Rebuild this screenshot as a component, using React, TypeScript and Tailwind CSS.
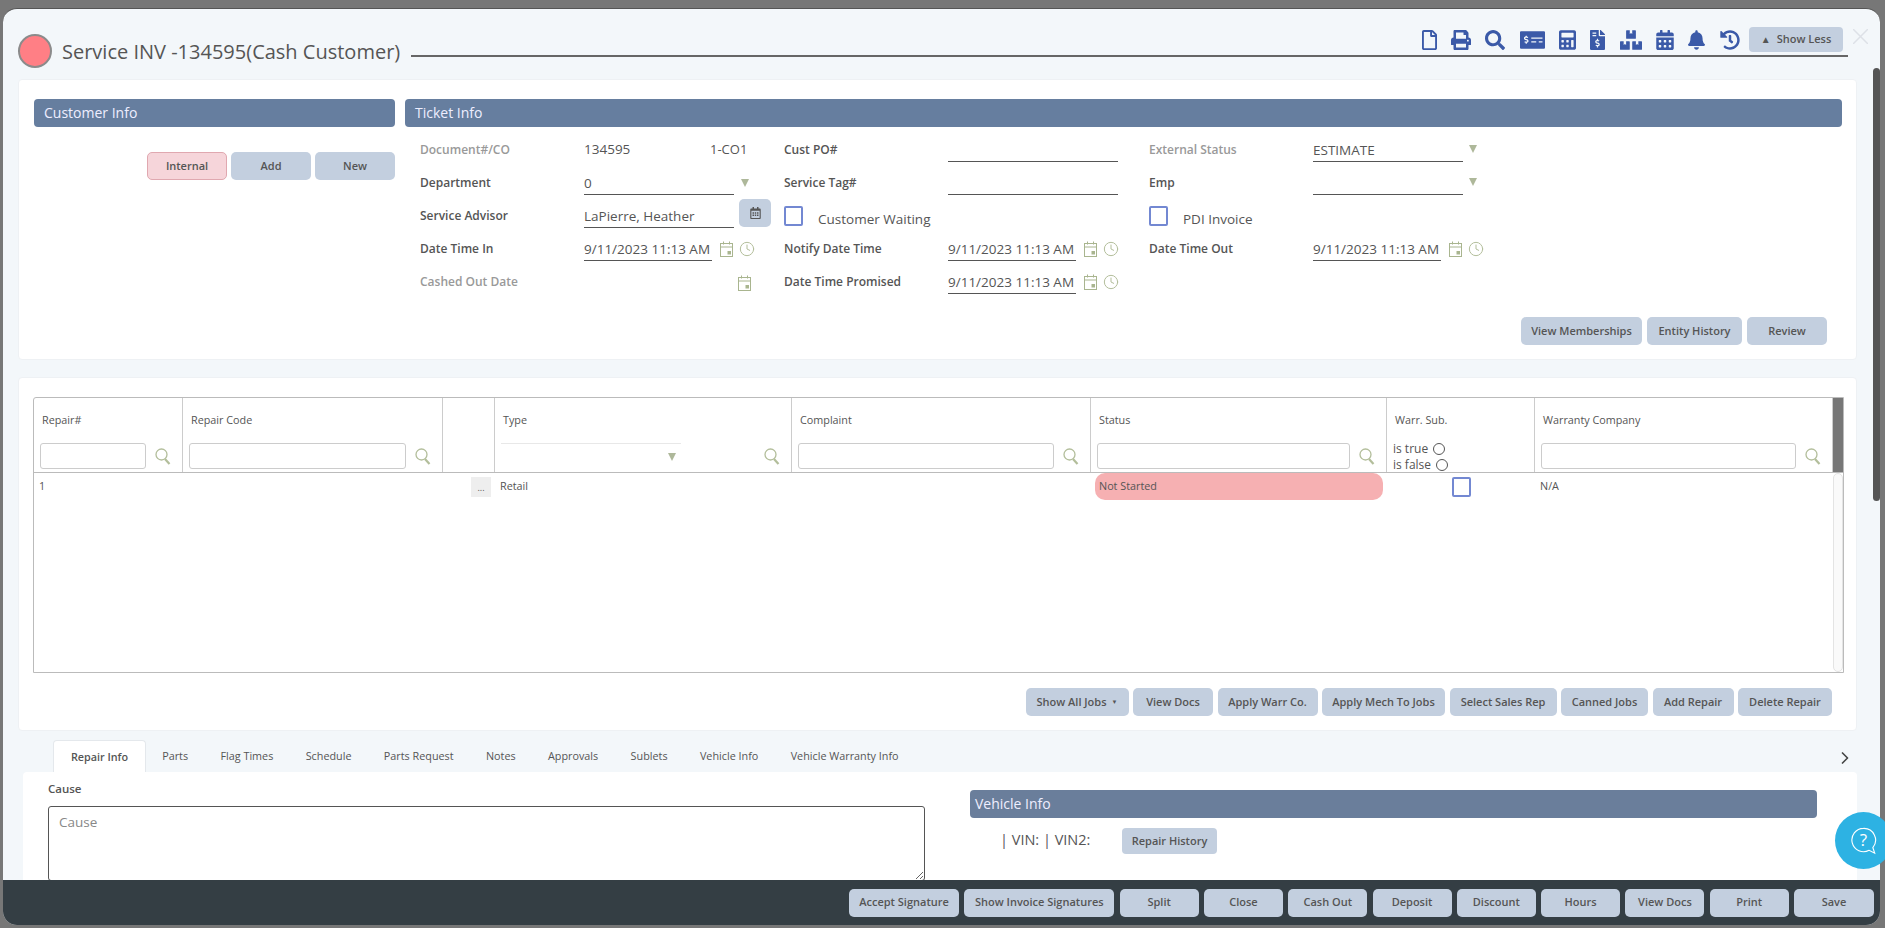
import { ReactNode } from 'react';
import { ChevronRight, Clock } from 'lucide-react';
import {
  FaRegFile,
  FaPrint,
  FaSearch,
  FaMoneyCheckAlt,
  FaCalculator,
  FaFileInvoiceDollar,
  FaBoxes,
  FaCalendarAlt,
  FaBell,
  FaHistory,
  FaRegCalendarAlt,
} from 'react-icons/fa';

const btn =
  'flex items-center justify-center rounded-[5px] bg-[#c3cfdf] text-[11px] font-semibold text-[#555] h-[28px] shrink-0';

const toolbarIcons = [
  { icon: <FaRegFile className="w-[15px] h-[20px]" />, cls: 'w-[15px] mr-[14px]' },
  { icon: <FaPrint className="w-[20px] h-[20px]" />, cls: 'w-[20px] mr-[14px]' },
  { icon: <FaSearch className="w-[20px] h-[20px]" />, cls: 'w-[20px] mr-[15px]' },
  { icon: <FaMoneyCheckAlt className="w-[25px] h-[20px]" />, cls: 'w-[25px] mr-[14px]' },
  { icon: <FaCalculator className="w-[17px] h-[20px]" />, cls: 'w-[17px] mr-[14px]' },
  { icon: <FaFileInvoiceDollar className="w-[15px] h-[20px]" />, cls: 'w-[15px] mr-[15px]' },
  { icon: <FaBoxes className="w-[22px] h-[20px]" />, cls: 'w-[22px] mr-[14px]' },
  { icon: <FaCalendarAlt className="w-[18px] h-[20px]" />, cls: 'w-[18px] mr-[14px]' },
  { icon: <FaBell className="w-[17px] h-[20px]" />, cls: 'w-[17px] mr-[15px]' },
  { icon: <FaHistory className="w-[20px] h-[20px]" />, cls: 'w-[20px] mr-[9px]' },
];

const jobButtons = [
  { label: 'View Docs', cls: 'w-[80px]' },
  { label: 'Apply Warr Co.', cls: 'w-[100px]' },
  { label: 'Apply Mech To Jobs', cls: 'w-[123px]' },
  { label: 'Select Sales Rep', cls: 'w-[107px]' },
  { label: 'Canned Jobs', cls: 'w-[87px]' },
  { label: 'Add Repair', cls: 'w-[81px]' },
  { label: 'Delete Repair', cls: 'w-[94px]' },
];

const footerButtons = [
  { label: 'Accept Signature', cls: 'w-[110px]' },
  { label: 'Show Invoice Signatures', cls: 'w-[150px]' },
  { label: 'Split', cls: 'w-[79px]' },
  { label: 'Close', cls: 'w-[79px]' },
  { label: 'Cash Out', cls: 'w-[79px]' },
  { label: 'Deposit', cls: 'w-[79px]' },
  { label: 'Discount', cls: 'w-[79px]' },
  { label: 'Hours', cls: 'w-[79px]' },
  { label: 'View Docs', cls: 'w-[79px]' },
  { label: 'Print', cls: 'w-[79px]' },
  { label: 'Save', cls: 'w-[80px]' },
];

const tabs = ['Parts', 'Flag Times', 'Schedule', 'Parts Request', 'Notes', 'Approvals', 'Sublets', 'Vehicle Info', 'Vehicle Warranty Info'];

function GreenCal({ className = '' }: { className?: string }) {
  return (
    <svg viewBox="0 0 15 16" className={`w-[15px] h-[16px] shrink-0 ${className}`} fill="none" stroke="#a9b58f" strokeWidth="1">
      <rect x="1.5" y="2.5" width="12" height="13" />
      <path d="M1.5 6h12M4.5 .5v3M10.5 .5v3" />
      <rect x="8.5" y="10" width="3.5" height="3.5" fill="#a9b58f" stroke="none" />
    </svg>
  );
}

function Triangle({ className = '' }: { className?: string }) {
  return (
    <svg viewBox="0 0 8 8" className={`w-[8px] h-[8px] shrink-0 ${className}`}>
      <polygon points="0,0 8,0 4,8" fill="#aeb89a" />
    </svg>
  );
}

function Check({ className = '' }: { className?: string }) {
  return <div className={`w-[19px] h-[20px] shrink-0 rounded-[2px] border-2 border-[#7388d2] bg-white ${className}`} />;
}

function Label({ children, muted }: { children: ReactNode; muted?: boolean }) {
  return (
    <div className={`w-[164px] shrink-0 text-[12px] font-semibold ${muted ? 'text-[#999]' : 'text-[#555]'}`}>{children}</div>
  );
}

function Underlined({ children, className }: { children?: ReactNode; className: string }) {
  return <div className={`h-[21px] border-b border-[#555] text-[13.5px] leading-[19px] text-[#555] mt-[3px] ${className}`}>{children}</div>;
}

function DateField({ label, className }: { label: string; className?: string }) {
  return (
    <div className="flex items-center h-[33px]">
      <Label>{label}</Label>
      <Underlined className={`w-[128px] whitespace-nowrap ${className ?? ''}`}>9/11/2023 11:13 AM</Underlined>
      <GreenCal className="ml-[7px]" />
      <Clock strokeWidth={1.5} className="ml-[5px] w-[16px] h-[16px] text-[#b3be9b]" />
    </div>
  );
}

function FilterIcon() {
  return (
    <svg viewBox="0 0 16 17" className="w-[16px] h-[17px] shrink-0" fill="none" stroke="#b3be9b">
      <circle cx="6.5" cy="6.5" r="5.5" strokeWidth="1.3" />
      <path d="M10 11l4.5 5" strokeWidth="2.2" />
    </svg>
  );
}

function FilterCell({ label, children, className = '' }: { label: string; children: ReactNode; className?: string }) {
  return (
    <div className={`border-r border-[#ccc] flex flex-col ${className}`}>
      <div className="h-[15px] mt-[14px] pl-[2px] text-[10.8px] leading-[15px] text-[#555] whitespace-nowrap">{label}</div>
      <div className="flex items-center gap-[9px] mt-[16px] h-[26px] pr-[11px]">{children}</div>
    </div>
  );
}

function FilterInput() {
  return <div className="flex-1 h-[26px] rounded-[3px] border border-[#ccc] bg-white" />;
}

export default function App() {
  return (
    <div className="relative w-[1885px] h-[928px] overflow-hidden bg-[#777] pt-[8px] pl-[3px] font-['Open_Sans',sans-serif]">
      <div className="relative w-[1877px] h-[917px] overflow-hidden rounded-[14px] border-t border-[#555] bg-[#f3f7fa]">
        {/* title bar */}
        <div className="h-[70px] relative">
          <div className="flex items-start pl-[15px] pt-[25px]">
            <div className="w-[34px] h-[34px] rounded-full bg-[#ff7f85] border-2 border-[#8b8b8b] shrink-0" />
            <div className="ml-[10px] w-[349px] text-[20px] leading-[36px] text-[#555] whitespace-nowrap shrink-0">Service INV -134595(Cash Customer)</div>
            <div className="mt-[21px] w-[1437px] h-[2px] bg-[#666] shrink-0" />
          </div>
          <div className="absolute right-[12px] top-[18px] flex items-center">
            <div className="flex items-center text-[#3b5aa8]">
              {toolbarIcons.map((t, i) => (
                <div key={i} className={`flex justify-center ${t.cls}`}>
                  {t.icon}
                </div>
              ))}
            </div>
            <div className="flex items-center justify-center gap-[6px] w-[94px] h-[25px] rounded-[4px] bg-[#c3cfdf] text-[11px] font-semibold text-[#555]">
              <span className="text-[10px]">▲</span>
              <span>Show Less</span>
            </div>
            <svg viewBox="0 0 15 15" className="ml-[10px] mb-[6px] w-[15px] h-[15px]" stroke="#dde1e7" strokeWidth="1.5">
              <path d="M0 0l15 15M15 0L0 15" />
            </svg>
          </div>
        </div>

        <div className="pl-[15px] pr-[23px]">
          {/* customer and ticket card */}
          <div className="h-[281px] rounded-[4px] bg-white border border-[#eef1f4] pl-[15px] pr-[14px] pt-[19px]">
            <div className="flex gap-[10px]">
              <div className="w-[361px] shrink-0">
                <div className="h-[28px] rounded-[4px] bg-[#667e9f] pl-[10px] text-[14px] leading-[28px] text-[#eef]">Customer Info</div>
                <div className="flex justify-end gap-[4px] mt-[25px]">
                  <div className={`${btn} w-[80px] bg-[#f6d5da] border border-[#e0a8b0]`}>Internal</div>
                  <div className={`${btn} w-[80px]`}>Add</div>
                  <div className={`${btn} w-[80px]`}>New</div>
                </div>
              </div>
              <div className="flex-1">
                <div className="h-[28px] rounded-[4px] bg-[#667e9f] pl-[10px] text-[14px] leading-[28px] text-[#eef]">Ticket Info</div>
                <div className="flex mt-[6px] pl-[15px]">
                  <div className="w-[364px] shrink-0">
                    <div className="flex items-center h-[33px]">
                      <Label muted>Document#/CO</Label>
                      <span className="w-[126px] text-[13.5px] text-[#555]">134595</span>
                      <span className="text-[13px] text-[#555]">1-CO1</span>
                    </div>
                    <div className="flex items-center h-[33px]">
                      <Label>Department</Label>
                      <Underlined className="w-[150px]">0</Underlined>
                      <Triangle className="ml-[7px]" />
                    </div>
                    <div className="flex items-center h-[33px]">
                      <Label>Service Advisor</Label>
                      <Underlined className="w-[150px]">LaPierre, Heather</Underlined>
                      <div className="ml-[5px] mb-[6px] w-[32px] h-[28px] rounded-[5px] bg-[#c3cfdf] flex items-center justify-center">
                        <FaRegCalendarAlt className="w-[11px] h-[12px] text-[#555]" />
                      </div>
                    </div>
                    <DateField label="Date Time In" />
                    <div className="flex items-center h-[33px]">
                      <Label muted>Cashed Out Date</Label>
                      <GreenCal className="ml-[153px] mt-[2px]" />
                    </div>
                  </div>
                  <div className="w-[365px] shrink-0">
                    <div className="flex items-center h-[33px]">
                      <Label>Cust PO#</Label>
                      <Underlined className="w-[170px]" />
                    </div>
                    <div className="flex items-center h-[33px]">
                      <Label>Service Tag#</Label>
                      <Underlined className="w-[170px]" />
                    </div>
                    <div className="flex items-center h-[33px]">
                      <Check />
                      <span className="ml-[15px] mt-[8px] text-[13.5px] text-[#555]">Customer Waiting</span>
                    </div>
                    <DateField label="Notify Date Time" />
                    <DateField label="Date Time Promised" />
                  </div>
                  <div className="flex-1">
                    <div className="flex items-center h-[33px]">
                      <Label muted>External Status</Label>
                      <Underlined className="w-[150px]">ESTIMATE</Underlined>
                      <Triangle className="ml-[6px] mb-[2px]" />
                    </div>
                    <div className="flex items-center h-[33px]">
                      <Label>Emp</Label>
                      <Underlined className="w-[150px]" />
                      <Triangle className="ml-[6px] mb-[2px]" />
                    </div>
                    <div className="flex items-center h-[33px]">
                      <Check />
                      <span className="ml-[15px] mt-[8px] text-[13.5px] text-[#555]">PDI Invoice</span>
                    </div>
                    <DateField label="Date Time Out" />
                  </div>
                </div>
                <div className="flex justify-end gap-[5px] mt-[19px] pr-[15px]">
                  <div className={`${btn} w-[121px]`}>View Memberships</div>
                  <div className={`${btn} w-[95px]`}>Entity History</div>
                  <div className={`${btn} w-[80px]`}>Review</div>
                </div>
              </div>
            </div>
          </div>

          {/* repairs card */}
          <div className="mt-[17px] h-[354px] rounded-[4px] bg-white border border-[#eef1f4] px-[14px] pt-[19px]">
            <div className="w-[1811px] border border-[#bbb] rounded-tl-[3px] text-[#555]">
              <div className="grid grid-cols-[149px_260px_52px_297px_299px_296px_148px_298px_10px] h-[75px] border-b border-[#bbb]">
                <FilterCell label="Repair#" className="pl-[6px]">
                  <FilterInput />
                  <FilterIcon />
                </FilterCell>
                <FilterCell label="Repair Code" className="pl-[6px]">
                  <FilterInput />
                  <FilterIcon />
                </FilterCell>
                <div className="border-r border-[#ccc]" />
                <FilterCell label="Type" className="pl-[6px]">
                  <div className="relative w-[180px] h-[26px] border-t border-[#e8e8e8] shrink-0 flex items-center justify-end pr-[5px]">
                    <Triangle />
                  </div>
                  <div className="flex-1" />
                  <FilterIcon />
                </FilterCell>
                <FilterCell label="Complaint" className="pl-[6px]">
                  <FilterInput />
                  <FilterIcon />
                </FilterCell>
                <FilterCell label="Status" className="pl-[6px]">
                  <FilterInput />
                  <FilterIcon />
                </FilterCell>
                <div className="border-r border-[#ccc] pl-[6px] text-[12px] text-[#555]">
                  <div className="h-[15px] mt-[14px] pl-[2px] text-[10.8px] leading-[15px]">Warr. Sub.</div>
                  <div className="flex items-center gap-[5px] mt-[15px] h-[14px] leading-[14px]">
                    is true <span className="w-[12px] h-[12px] rounded-full border border-[#555]" />
                  </div>
                  <div className="flex items-center gap-[5px] mt-[2px] h-[14px] leading-[14px]">
                    is false <span className="w-[12px] h-[12px] rounded-full border border-[#555]" />
                  </div>
                </div>
                <FilterCell label="Warranty Company" className="pl-[6px]">
                  <FilterInput />
                  <FilterIcon />
                </FilterCell>
                <div className="bg-[#777]" />
              </div>
              <div className="flex h-[199px]">
                <div className="flex-1">
                  <div className="grid grid-cols-[149px_260px_52px_297px_299px_296px_148px_298px] h-[28px] text-[10.8px] text-[#555]">
                    <div className="pl-[5px] leading-[26px]">1</div>
                    <div />
                    <div className="flex justify-end pr-[4px] pt-[4px]">
                      <div className="w-[20px] h-[20px] bg-[#eee] text-center text-[9px] leading-[22px]">...</div>
                    </div>
                    <div className="pl-[5px] leading-[26px]">Retail</div>
                    <div />
                    <div className="pl-[4px] pr-[4px]">
                      <div className="h-[27px] rounded-[10px] bg-[#f6b0b2] pl-[4px] leading-[26px] text-[#555]">Not Started</div>
                    </div>
                    <div className="flex justify-center pt-[4px]">
                      <Check />
                    </div>
                    <div className="pl-[5px] leading-[26px]">N/A</div>
                  </div>
                </div>
                <div className="w-[10px] rounded-full border border-[#e4e4e4] bg-[#fafafa]" />
              </div>
            </div>
            <div className="flex justify-end gap-[4.5px] mt-[15px] pr-[10px]">
              <div className={`${btn} w-[103px] gap-[5px]`}>
                Show All Jobs <span className="text-[6px]">▼</span>
              </div>
              {jobButtons.map((b) => (
                <div key={b.label} className={`${btn} ${b.cls}`}>
                  {b.label}
                </div>
              ))}
            </div>
          </div>

          {/* tabs */}
          <div className="flex items-end justify-between mt-[9px] h-[32px] ml-[35px] pr-[2px]">
            <div className="flex text-[10.8px] text-[#555]">
              <div className="h-[32px] w-[93px] rounded-t-[4px] border border-b-0 border-[#e4e8ec] bg-white text-center font-semibold leading-[31px]">Repair Info</div>
              {tabs.map((t) => (
                <div key={t} className="h-[32px] px-[16.2px] leading-[31px] whitespace-nowrap">
                  {t}
                </div>
              ))}
            </div>
            <ChevronRight strokeWidth={2} className="w-[20px] h-[20px] mb-[4px] text-[#444]" />
          </div>

          {/* repair info card */}
          <div className="flex gap-[45px] ml-[5px] h-[120px] rounded-[4px] bg-white pl-[25px] pt-[8px]">
            <div className="w-[877px] shrink-0">
              <div className="text-[11.5px] font-semibold text-[#555]">Cause</div>
              <textarea
                placeholder="Cause"
                className="block w-full mt-[9px] h-[75px] resize rounded-[3px] border border-[#555] pl-[10px] pt-[5px] text-[13.5px] placeholder:text-[#888]"
              />
            </div>
            <div className="w-[847px] pt-[10px]">
              <div className="h-[28px] rounded-[4px] bg-[#6a7e9b] pl-[5px] text-[14px] leading-[28px] text-[#eef]">Vehicle Info</div>
              <div className="flex items-start mt-[10px] pl-[30px]">
                <span className="w-[122px] mt-[1px] text-[14.5px] text-[#555]">| VIN: | VIN2:</span>
                <div className="flex items-center justify-center w-[95px] h-[26px] rounded-[4px] bg-[#c3cfdf] text-[11px] font-semibold text-[#555]">Repair History</div>
              </div>
            </div>
          </div>
        </div>

        {/* page scrollbar */}
        <div className="absolute right-0 top-[59px] w-[7px] h-[433px] rounded-full bg-[#555]" />

        {/* footer */}
        <div className="absolute left-0 right-0 bottom-0 h-[45px] rounded-b-[10px] bg-[#343e44] flex items-center justify-end gap-[5.3px] pr-[6px]">
          {footerButtons.map((b) => (
            <div key={b.label} className={`${btn} ${b.cls}`}>
              {b.label}
            </div>
          ))}
        </div>
      </div>

      {/* help bubble */}
      <div className="absolute left-[1835px] top-[812px] w-[57px] h-[57px] rounded-full bg-[#2db2e3] flex items-center justify-start pl-[15px]">
        <div className="relative w-[27px] h-[28px]">
          <svg viewBox="0 0 28 30" className="w-[27px] h-[28px]" fill="none" stroke="#fff" strokeWidth="1.2">
            <path d="M14 1.5a12.5 12.5 0 1 0 6 23.5l6 3-2-6a12.5 12.5 0 0 0-10-20.5z" />
          </svg>
          <span className="absolute inset-0 text-center text-[17px] leading-[26px] text-white">?</span>
        </div>
      </div>
    </div>
  );
}
